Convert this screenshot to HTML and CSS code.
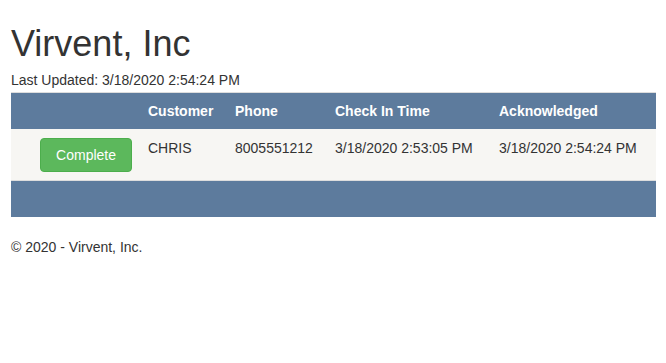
FILE: index.html
```html
<!DOCTYPE html>
<html lang="en">
<head>
  <meta charset="UTF-8">
  <meta name="viewport" content="width=device-width, initial-scale=1.0">
  <title>Virvent, Inc</title>
  <link rel="stylesheet" href="styles.css">
</head>
<body>
  <div class="container">
    <h1>Virvent, Inc</h1>
    <div class="updated">Last Updated: 3/18/2020 2:54:24 PM</div>
    <table class="grid">
      <colgroup>
        <col class="col-action">
        <col class="col-customer">
        <col class="col-phone">
        <col class="col-checkin">
        <col class="col-ack">
      </colgroup>
      <tr class="grid-header">
        <th></th>
        <th>Customer</th>
        <th>Phone</th>
        <th>Check In Time</th>
        <th>Acknowledged</th>
      </tr>
      <tr class="grid-row">
        <td class="action"><button class="btn-complete">Complete</button></td>
        <td>CHRIS</td>
        <td>8005551212</td>
        <td>3/18/2020 2:53:05 PM</td>
        <td>3/18/2020 2:54:24 PM</td>
      </tr>
      <tr class="grid-footer">
        <td colspan="5">&nbsp;</td>
      </tr>
    </table>
    <footer>
      <p>&copy; 2020 - Virvent, Inc.</p>
    </footer>
  </div>
</body>
</html>
```

FILE: styles.css
```css
body {
  margin: 0;
  font-family: "Liberation Sans", Arial, sans-serif;
  font-size: 14px;
  line-height: 20px;
  color: #333;
  background-color: #fff;
}

.container {
  padding: 0 10px 0 11px;
}

h1 {
  margin: 24px 0 6px;
  font-size: 36px;
  font-weight: 500;
  line-height: 1.1;
}

.updated {
  line-height: 20px;
}

.grid {
  width: 100%;
  margin-top: 2px;
  margin-bottom: 20px;
  border-collapse: collapse;
  table-layout: fixed;
}

.col-action { width: 129px; }
.col-customer { width: 87px; }
.col-phone { width: 100px; }
.col-checkin { width: 164px; }

.grid th,
.grid td {
  padding: 8px;
  text-align: left;
  vertical-align: top;
  border-top: 1px solid #ddd;
}

.grid-header {
  background-color: #5d7b9d;
  color: #fff;
  font-weight: bold;
}

.grid-row {
  background-color: #f7f6f3;
  color: #333;
}

.grid-row td {
  border-top-color: #f7f6f3;
}

.grid-row .action {
  text-align: right;
}

.grid-footer {
  background-color: #5d7b9d;
  color: #fff;
}

.btn-complete {
  display: inline-block;
  padding: 6px 15px;
  font-family: inherit;
  font-size: 14px;
  line-height: 20px;
  color: #fff;
  background-color: #5cb85c;
  border: 1px solid #4cae4c;
  border-radius: 4px;
  cursor: pointer;
}

.btn-complete:hover {
  background-color: #449d44;
}

footer p {
  margin: 0 0 10px;
}
```
